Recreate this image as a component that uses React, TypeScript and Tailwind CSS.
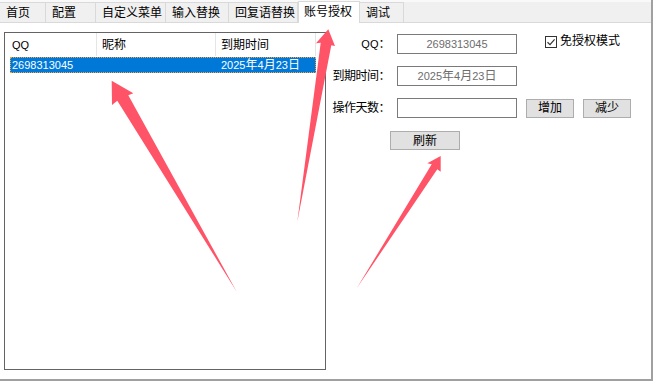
import React from 'react';

const tabs = [
  { label: '首页', w: 'w-[46px]' },
  { label: '配置', w: 'w-[50px]' },
  { label: '自定义菜单', w: 'w-[70px]' },
  { label: '输入替换', w: 'w-[63px]' },
  { label: '回复语替换', w: 'w-[69px]' },
  { label: '账号授权', w: 'w-[62px]', active: true },
  { label: '调试', w: 'w-[44px]' },
];

// digit runs are a touch smaller than the CJK glyphs in the original UI font
function Num({ s }: { s: string }) {
  return (
    <>
      {s.split(/(\d+)/).map((part, i) =>
        /^\d+$/.test(part) ? (
          <span key={i} className="text-[11px]">{part}</span>
        ) : (
          <span key={i}>{part}</span>
        ),
      )}
    </>
  );
}

function TabBar() {
  return (
    <div className="flex h-[23px] items-end border-b border-[#d9d9d9] bg-[#f0f0f0] shadow-[inset_0_2px_0_#f9f9f9]">
      {tabs.map((t) =>
        t.active ? (
          <div
            key={t.label}
            className={`${t.w} relative z-10 -mb-px flex h-[22px] items-center border-x border-t border-[#d9d9d9] bg-white pl-[5px] pb-[1px]`}
          >
            {t.label}
          </div>
        ) : (
          <div
            key={t.label}
            className={`${t.w} flex h-[20px] items-center border-r border-t border-[#d9d9d9] bg-[#f0f0f0] pl-[6px]`}
          >
            {t.label}
          </div>
        ),
      )}
    </div>
  );
}

function ListView() {
  return (
    <div className="h-[338px] w-[322px] border border-[#646464] bg-white">
      <div className="flex h-[23px] items-center">
        <div className="flex h-full w-[91px] items-center pl-[7px] text-[11px]">QQ</div>
        <div className="flex h-full w-[119px] items-center border-l border-[#e5e5e5] pl-[5px]">昵称</div>
        <div className="flex h-full w-[101px] items-center border-l border-r border-[#e5e5e5] pl-[5px]">到期时间</div>
      </div>
      <div className="ml-[5px] mt-[1px] flex h-[16px] w-[306px] items-center border border-dotted border-[#f2a33a] bg-[#0078d7] text-white">
        <div className="w-[85px] pl-[1px]">
          <Num s="2698313045" />
        </div>
        <div className="w-[119px]" />
        <div className="pl-[6px]">
          <Num s="2025年4月23日" />
        </div>
      </div>
    </div>
  );
}

function Field({ value }: { value?: string }) {
  return (
    <div className="flex h-[20px] w-[120px] items-center justify-center border border-[#7a7a7a] bg-white text-[#6d6d6d]">
      {value ? <Num s={value} /> : null}
    </div>
  );
}

function Btn({ label, w, h }: { label: string; w: string; h: string }) {
  return (
    <button className={`${w} ${h} flex items-center justify-center border border-[#adadad] bg-[#e1e1e1] text-black`}>
      {label}
    </button>
  );
}

function Label({ children }: { children: React.ReactNode }) {
  return <div className="flex w-[60px] justify-end whitespace-nowrap tracking-[-0.5px]">{children}</div>;
}

function AuthForm() {
  return (
    <div className="flex flex-col pl-[4px] pt-[11px]">
      <div className="flex h-[20px] items-center">
        <Label>
          <span className="text-[11px] tracking-normal">QQ</span>：
        </Label>
        <div className="ml-[7px]">
          <Field value="2698313045" />
        </div>
        <label className="ml-[28px] flex items-center gap-[3px] self-start">
          <span className="mt-[1px] flex h-[12px] w-[12px] items-center justify-center border border-[#333] bg-white">
            <svg width="10" height="10" viewBox="0 0 10 10">
              <path d="M1.5 5.2 L4 7.6 L8.6 2.4" fill="none" stroke="#333" strokeWidth="1.2" />
            </svg>
          </span>
          <span>免授权模式</span>
        </label>
      </div>
      <div className="mt-[12px] flex h-[20px] items-center">
        <Label>到期时间：</Label>
        <div className="ml-[7px]">
          <Field value="2025年4月23日" />
        </div>
      </div>
      <div className="mt-[12px] flex h-[20px] items-center">
        <Label>操作天数：</Label>
        <div className="ml-[7px]">
          <Field />
        </div>
        <div className="ml-[9px] flex gap-[9px]">
          <Btn label="增加" w="w-[48px]" h="h-[19px]" />
          <Btn label="减少" w="w-[48px]" h="h-[19px]" />
        </div>
      </div>
      <div className="ml-[60px] mt-[13px]">
        <Btn label="刷新" w="w-[70px]" h="h-[19px]" />
      </div>
    </div>
  );
}

function Arrows() {
  return (
    <svg className="pointer-events-none absolute inset-0" width="653" height="382" viewBox="0 0 653 382">
      <polygon
        fill="#ff5468"
        points="111.7,80.7 133.3,93.3 128.3,95.3 236.7,291.7 117.3,100.7 112,105"
      />
      <polygon
        fill="#ff5468"
        points="328.3,29.3 335,46 331.3,45.3 297.3,221.7 320.7,42.7 316,43.3"
      />
      <polygon
        fill="#ff5468"
        points="440.7,156 440.7,171.7 437.3,169.3 356.7,288.3 431.7,164.3 427.3,163.3"
      />
    </svg>
  );
}

export default function App() {
  return (
    <div className="relative h-[382px] w-[653px] overflow-hidden bg-white font-['Liberation_Sans','Noto_Sans_CJK_SC',sans-serif] text-[12px] leading-[14px] text-black">
      <div className="flex h-[381px] w-[653px] flex-col border-b-2 border-r-2 border-[#a0a0a0]">
        <TabBar />
        <div className="flex flex-1 bg-white">
          <div className="pl-[4px] pt-[9px]">
            <ListView />
          </div>
          <AuthForm />
        </div>
      </div>
      <Arrows />
    </div>
  );
}
